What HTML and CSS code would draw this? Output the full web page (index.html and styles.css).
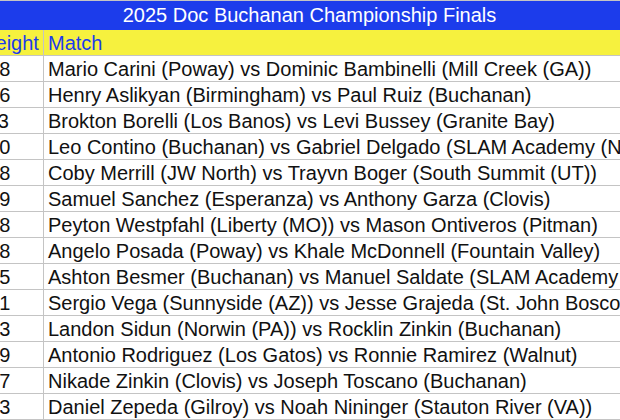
FILE: index.html
```html
<!DOCTYPE html>
<html>
<head>
<meta charset="utf-8">
<link rel="stylesheet" href="styles.css">
</head>
<body>
<table class="results">
  <colgroup>
    <col class="col-weight">
    <col class="col-match">
  </colgroup>
  <thead>
    <tr class="title-row"><th colspan="2" class="title">2025 Doc Buchanan Championship Finals</th></tr>
    <tr class="head-row"><th class="h-weight">Weight</th><th class="h-match">Match</th></tr>
  </thead>
  <tbody>
    <tr><td class="w">138</td><td class="m">Mario Carini (Poway) vs Dominic Bambinelli (Mill Creek (GA))</td></tr>
    <tr><td class="w">106</td><td class="m">Henry Aslikyan (Birmingham) vs Paul Ruiz (Buchanan)</td></tr>
    <tr><td class="w">113</td><td class="m">Brokton Borelli (Los Banos) vs Levi Bussey (Granite Bay)</td></tr>
    <tr><td class="w">120</td><td class="m">Leo Contino (Buchanan) vs Gabriel Delgado (SLAM Academy (NV))</td></tr>
    <tr><td class="w">128</td><td class="m">Coby Merrill (JW North) vs Trayvn Boger (South Summit (UT))</td></tr>
    <tr><td class="w">129</td><td class="m">Samuel Sanchez (Esperanza) vs Anthony Garza (Clovis)</td></tr>
    <tr><td class="w">148</td><td class="m">Peyton Westpfahl (Liberty (MO)) vs Mason Ontiveros (Pitman)</td></tr>
    <tr><td class="w">158</td><td class="m">Angelo Posada (Poway) vs Khale McDonnell (Fountain Valley)</td></tr>
    <tr><td class="w">165</td><td class="m">Ashton Besmer (Buchanan) vs Manuel Saldate (SLAM Academy (NV))</td></tr>
    <tr><td class="w">171</td><td class="m">Sergio Vega (Sunnyside (AZ)) vs Jesse Grajeda (St. John Bosco)</td></tr>
    <tr><td class="w">183</td><td class="m">Landon Sidun (Norwin (PA)) vs Rocklin Zinkin (Buchanan)</td></tr>
    <tr><td class="w">199</td><td class="m">Antonio Rodriguez (Los Gatos) vs Ronnie Ramirez (Walnut)</td></tr>
    <tr><td class="w">217</td><td class="m">Nikade Zinkin (Clovis) vs Joseph Toscano (Buchanan)</td></tr>
    <tr><td class="w">283</td><td class="m">Daniel Zepeda (Gilroy) vs Noah Nininger (Stauton River (VA))</td></tr>
  </tbody>
</table>
</body>
</html>
```
FILE: styles.css
```css
html, body {
  margin: 0;
  padding: 0;
  background: #ffffff;
  overflow: hidden;
}

.results {
  border-collapse: collapse;
  table-layout: fixed;
  width: 648px;
  margin-left: -28px;
  font-family: "Liberation Sans", Arial, sans-serif;
  font-size: 20px;
  color: #111111;
}

.col-weight { width: 71px; }
.col-match { width: 577px; }

.results th,
.results td {
  border: 1px solid #c4c4c4;
  white-space: nowrap;
  overflow: hidden;
  padding: 0 3px 0 4px;
  text-align: left;
  font-weight: normal;
  line-height: 22px;
}

.title-row .title {
  background: #1c3ceb;
  color: #ffffff;
  height: 28px;
  text-align: center;
  padding-left: 30px;
  padding-right: 4px;
  border-color: #1c3ceb;
  border-top-color: #c4c4c4;
}

.head-row th {
  background: #f6f13e;
  color: #1c3ceb;
  height: 25px;
}

.results tbody td {
  height: 25px;
}
```
